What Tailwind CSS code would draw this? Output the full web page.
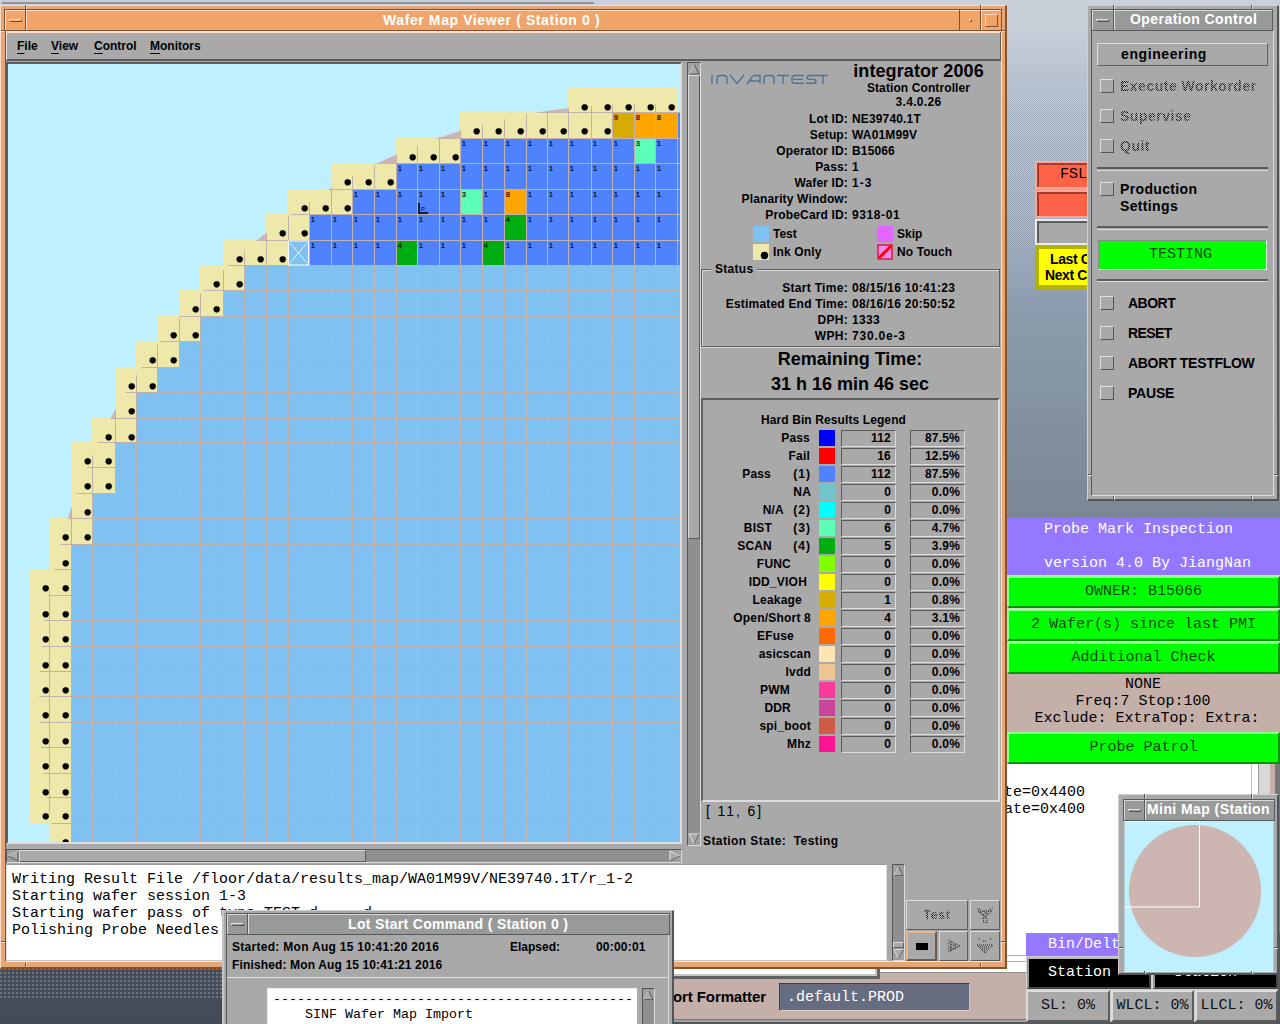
<!DOCTYPE html>
<html lang="en">
<head>
<meta charset="utf-8">
<title>Wafer Map Viewer</title>
<script src="https://cdn.jsdelivr.net/npm/@tailwindcss/browser@4"></script>
</head>
<body class="w-[1280px] h-[1024px] overflow-hidden font-['Liberation_Sans',sans-serif] text-black">
<div class="relative w-[1280px] h-[1024px] overflow-hidden bg-[linear-gradient(#c9d0da_0px,#c9d0da_25px,#8c9bad_300px,#8897a8_370px,#7b8794_515px,#474d59_968px,#444b57_1024px)]">

  <!-- desktop dither -->
  <div class="absolute left-[1007px] top-[26px] w-[273px] h-[294px] bg-[repeating-conic-gradient(#8393a7_0_25%,#d3dae3_0_50%)] bg-[length:2px_2px] opacity-50 [mask-image:linear-gradient(transparent,black_40%,black_60%,transparent)]"></div>
  <div class="absolute left-[1007px] top-[380px] w-[273px] h-[138px] bg-[repeating-conic-gradient(#66727f_0_25%,#93a2b1_0_50%)] bg-[length:2px_2px] opacity-40 [mask-image:linear-gradient(transparent,black)]"></div>
  <div class="absolute left-0 top-[968px] w-[230px] h-[30px] bg-[radial-gradient(circle_at_1px_1px,#6c7783_0.8px,transparent_1px)] bg-[length:4px_4px]"></div>
  <div class="absolute left-[2px] top-[2px] w-[592px] h-[2px] bg-[#8f959a]"></div>

  <!-- probing status stack -->
  <div class="absolute left-[1035px] top-[161px] w-[60px] flex flex-col gap-[1px] font-['Liberation_Mono',monospace] text-[15px]">
    <div class="h-7 border-2 border-[#ffa797] bg-[#ff6347] shadow-[inset_2px_2px_#a43b2d] pl-[23px] leading-[23px]">FSL</div>
    <div class="h-7 border-2 border-[#ffa797] bg-[#ff6347] shadow-[inset_2px_2px_#a43b2d]"></div>
    <div class="h-[26px] border-2 border-[#ececec] bg-[#a9a9a9] shadow-[inset_2px_2px_#5c5c5c]"></div>
    <div class="h-[44px] -mt-[1px] border-4 border-[#b2b200] bg-[#ffff00] font-['Liberation_Sans',sans-serif] font-bold text-[14px] tracking-[-0.4px] leading-4 whitespace-nowrap pt-[2px]">
      <div class="pl-[11px]">Last C</div>
      <div class="pl-[6px]">Next C</div>
    </div>
  </div>

  <!-- Probe mark inspection -->
  <div class="absolute left-[1007px] top-[518px] w-[273px] h-[246px] bg-[#c4b0a8] font-['Liberation_Mono',monospace] text-[15px] whitespace-nowrap">
    <div class="h-[57px] bg-[#9478ff] pl-[37px] pt-[3px] text-white leading-[17px]">Probe Mark Inspection<br><br>version 4.0 By JiangNan</div>
    <div class="flex flex-col gap-[1px] bg-[#c8e8c0] pt-[1px]">
      <div class="h-8 border-2 border-t-[#90ff90] border-l-[#90ff90] border-b-[#009400] border-r-[#009400] bg-[#00ff00] text-center leading-7 text-[#0c470c]">OWNER: B15066</div>
      <div class="h-8 border-2 border-t-[#90ff90] border-l-[#90ff90] border-b-[#009400] border-r-[#009400] bg-[#00ff00] text-center leading-7 text-[#0c470c]">2 Wafer(s) since last PMI</div>
      <div class="h-8 border-2 border-t-[#90ff90] border-l-[#90ff90] border-b-[#009400] border-r-[#009400] bg-[#00ff00] text-center leading-7 text-[#0c470c]">Additional Check</div>
    </div>
    <div class="h-[57px] pt-[2px] pl-[7px] text-center leading-[17px] text-black"><div class="-ml-2">NONE</div><div class="-ml-2">Freq:7 Stop:100</div><div>Exclude: ExtraTop: Extra:</div></div>
    <div class="h-8 mt-[1px] border-2 border-t-[#90ff90] border-l-[#90ff90] border-b-[#009400] border-r-[#009400] bg-[#00ff00] text-center leading-7 text-[#0c470c]">Probe Patrol</div>
  </div>

  <!-- log terminal behind -->
  <div class="absolute left-[880px] top-[764px] w-[400px] h-[208px] bg-white flex">
    <div class="w-[372px] pt-5 pl-[115px] font-['Liberation_Mono',monospace] text-[15px] leading-[17px] border-r border-[#c0c0c0] h-[191px]">ate=0x4400<br>&nbsp;ate=0x400</div>
    <div class="w-[6px]"></div>
    <div class="w-3 bg-[#d9d9d9] border-l border-[#999]"></div>
    <div class="w-[5px] bg-[#c4b0a8]"></div>
    <div class="grow bg-[#777]"></div>
  </div>
  <div class="absolute left-[1007px] top-[955px] w-[20px] h-[7px] border-y border-[#b0b0b0]"></div>

  <!-- report formatter window -->
  <div class="absolute left-[660px] top-[972px] w-[620px] h-[52px] border-t border-[#8e8e8e] bg-[#c4b0a8] flex flex-col">
    <div class="h-[46px] flex items-start">
      <div class="ml-[13px] mt-[14px] w-[106px] text-[15px] leading-5 font-bold tracking-[-0.1px]">ort Formatter</div>
      <div class="mt-[10px] w-[191px] h-[28px] bg-[#666d80] border border-t-[#3c414c] border-l-[#3c414c] border-b-[#dccfc8] border-r-[#d0c4c0] pl-[7px] leading-[27px] font-['Liberation_Mono',monospace] text-[15px] text-white">.default.PROD</div>
    </div>
    <div class="h-[3px] bg-[#a0a0a0] border-t border-[#777]"></div>
    <div class="grow bg-[#55585a]"></div>
  </div>
  <div class="absolute left-[600px] top-[960px] w-[280px] h-[19px] bg-white border-b-[3px] border-r-[3px] border-[#5f6464] shadow-[inset_-2px_-2px_#c8c8c8]"></div>

  <!-- bin / delta panel -->
  <div class="absolute left-[1026px] top-[933px] w-[254px] h-[91px] bg-[#d0d0d0] border-b-2 border-r-2 border-[#55585a] font-['Liberation_Mono',monospace] text-[15px] flex flex-col gap-[1px]">
    <div class="h-[23px] bg-[#9478ff] text-white leading-[23px] pl-[22px]">Bin/Delta</div>
    <div class="flex gap-[2px] h-[32px] pl-[1px] text-white leading-[27px]">
      <div class="w-[124px] bg-black border-2 border-t-[#bbb] border-l-[#999] border-b-[#444] border-r-[#444] pl-[19px]">Station +</div>
      <div class="w-[125px] bg-black border-2 border-t-[#bbb] border-l-[#999] border-b-[#444] border-r-[#444] pl-[19px]">Station +</div>
    </div>
    <div class="flex gap-[1px] h-[32px] leading-7 text-center text-[#111]">
      <div class="w-[84px] bg-[#a9a9a9] border-2 border-t-[#ddd] border-l-[#ddd] border-b-[#5c5c5c] border-r-[#5c5c5c]">SL: 0%</div>
      <div class="w-[83px] bg-[#a9a9a9] border-2 border-t-[#ddd] border-l-[#ddd] border-b-[#5c5c5c] border-r-[#5c5c5c]">WLCL: 0%</div>
      <div class="w-[83px] bg-[#a9a9a9] border-2 border-t-[#ddd] border-l-[#ddd] border-b-[#5c5c5c] border-r-[#5c5c5c]">LLCL: 0%</div>
    </div>
  </div>

  <!-- operation control window -->
  <div class="absolute left-[1087px] top-[5px] w-[192px] h-[496px] bg-[#a9a9a9] border border-t-[#d0d0d0] border-l-[#d0d0d0] border-b-[#50555a] border-r-[#50555a] shadow-[inset_-1px_-1px_#50555a]">
    <div class="m-[3px] mr-[5px] h-[22px] border border-[#555a5a] flex bg-[#979a99] shadow-[inset_1px_1px_#d8d8d8]">
      <div class="w-[22px] border-r border-[#555a5a] flex items-center justify-center"><div class="w-[13px] h-[3px] border border-t-[#e0e0e0] border-l-[#e0e0e0] border-b-[#555] border-r-[#555]"></div></div>
      <div class="grow border-l border-[#e0e0e0] pl-[15px] text-white font-bold text-[14px] leading-[19px] tracking-[0.45px] whitespace-nowrap">Operation Control</div>
    </div>
    <div class="ml-[3px] mr-[4px] -mt-[3px] h-[465px] border border-t-0 border-l-[#555a5a] border-r-[#dcdcdc] border-b-[#dcdcdc] px-[5px] flex flex-col text-[14px] font-bold">
      <div class="mt-[12px] h-[23px] border border-t-[#dcdcdc] border-l-[#dcdcdc] border-b-[#5f5f5f] border-r-[#5f5f5f] pl-[23px] leading-[20px] tracking-[0.6px]">engineering</div>
      <div class="flex flex-col mt-[5px] pl-[3px] tracking-[0.5px]">
        <div class="h-[30px] flex items-center gap-[6px]"><div class="w-[14px] h-[14px] border border-t-[#e0e0e0] border-l-[#e0e0e0] border-b-[#555] border-r-[#555]"></div><div class="whitespace-nowrap bg-[repeating-conic-gradient(#111_0_25%,#a9a9a9_0_50%)] bg-[length:2px_2px] bg-clip-text text-transparent">Execute Workorder</div></div>
        <div class="h-[30px] flex items-center gap-[6px]"><div class="w-[14px] h-[14px] border border-t-[#e0e0e0] border-l-[#e0e0e0] border-b-[#555] border-r-[#555]"></div><div class="bg-[repeating-conic-gradient(#111_0_25%,#a9a9a9_0_50%)] bg-[length:2px_2px] bg-clip-text text-transparent">Supervise</div></div>
        <div class="h-[30px] flex items-center gap-[6px]"><div class="w-[14px] h-[14px] border border-t-[#e0e0e0] border-l-[#e0e0e0] border-b-[#555] border-r-[#555]"></div><div class="bg-[repeating-conic-gradient(#111_0_25%,#a9a9a9_0_50%)] bg-[length:2px_2px] bg-clip-text text-transparent">Quit</div></div>
      </div>
      <div class="mt-[6px] h-[4px] border-t-2 border-b border-t-[#5c5c5c] border-b-[#dcdcdc]"></div>
      <div class="h-[55px] pl-[3px] pt-[10px] flex gap-[6px]"><div class="w-[14px] h-[14px] mt-[1px] border border-t-[#e0e0e0] border-l-[#e0e0e0] border-b-[#555] border-r-[#555]"></div><div class="leading-[17px] tracking-[0.35px]">Production<br>Settings</div></div>
      <div class="h-[4px] border-t-2 border-b border-t-[#5c5c5c] border-b-[#dcdcdc]"></div>
      <div class="mt-[10px] h-[30px] mx-[1px] border border-t-[#888] border-l-[#888] border-b-[#e0ffe0] border-r-[#e0ffe0] bg-[#00ff00] text-center font-normal font-['Liberation_Mono',monospace] text-[15px] leading-[28px] text-[#0c470c] pr-[4px]">TESTING</div>
      <div class="mt-[9px] h-[3px] border-t-2 border-b border-t-[#5c5c5c] border-b-[#dcdcdc]"></div>
      <div class="flex flex-col mt-[6px] pl-[3px] text-[14px]">
        <div class="h-[30px] flex items-center gap-[14px]"><div class="w-[14px] h-[14px] border border-t-[#e0e0e0] border-l-[#e0e0e0] border-b-[#555] border-r-[#555]"></div><div class="tracking-[-0.5px]">ABORT</div></div>
        <div class="h-[30px] flex items-center gap-[14px]"><div class="w-[14px] h-[14px] border border-t-[#e0e0e0] border-l-[#e0e0e0] border-b-[#555] border-r-[#555]"></div><div class="tracking-[-0.6px]">RESET</div></div>
        <div class="h-[30px] flex items-center gap-[14px]"><div class="w-[14px] h-[14px] border border-t-[#e0e0e0] border-l-[#e0e0e0] border-b-[#555] border-r-[#555]"></div><div class="whitespace-nowrap tracking-[-0.3px]">ABORT TESTFLOW</div></div>
        <div class="h-[30px] flex items-center gap-[14px]"><div class="w-[14px] h-[14px] border border-t-[#e0e0e0] border-l-[#e0e0e0] border-b-[#555] border-r-[#555]"></div><div class="tracking-[-0.2px]">PAUSE</div></div>
      </div>
    </div>
    <div class="absolute left-[25px] -top-[1px] w-[2px] h-[4px] border-l border-[#555] bg-[#e0e0e0]"></div>
    <div class="absolute left-[163px] -top-[1px] w-[2px] h-[4px] border-l border-[#555] bg-[#e0e0e0]"></div>
    <div class="absolute left-[25px] bottom-0 w-[2px] h-[4px] border-l border-[#555] bg-[#e0e0e0]"></div>
    <div class="absolute left-[163px] bottom-0 w-[2px] h-[4px] border-l border-[#555] bg-[#e0e0e0]"></div>
    <div class="absolute left-0 bottom-[24px] w-[4px] h-[2px] border-t border-[#555] bg-[#e0e0e0]"></div>
    <div class="absolute right-0 bottom-[24px] w-[4px] h-[2px] border-t border-[#555] bg-[#e0e0e0]"></div>
  </div>

  <!-- mini map window -->
  <div class="absolute left-[1118px] top-[794px] w-[161px] h-[181px] bg-[#a9a9a9] border border-t-[#d0d0d0] border-l-[#d0d0d0] border-b-[#50555a] border-r-[#50555a] shadow-[inset_-1px_-1px_#50555a]">
    <div class="mt-[4px] ml-[4px] mr-[3px] h-[22px] border border-[#555a5a] flex bg-[#979a99] shadow-[inset_1px_1px_#d8d8d8]">
      <div class="w-[21px] border-r border-[#555a5a] flex items-center justify-center"><div class="w-[13px] h-[3px] border border-t-[#e0e0e0] border-l-[#e0e0e0] border-b-[#555] border-r-[#555]"></div></div>
      <div class="grow border-l border-[#e0e0e0] pl-[1px] text-white font-bold text-[14px] leading-[19px] whitespace-nowrap tracking-[0.42px]">Mini Map (Station</div>
    </div>
    <svg class="block ml-[5px] border-b border-[#e8e8e8]" width="150" height="151" viewBox="0 0 150 151"><rect width="150" height="151" fill="#bff0ff"/><circle cx="71" cy="70.500" r="66.500" fill="#cdb5b2"/><path d="M0 .5H75.500V86.500H0" fill="none" stroke="#fff"/></svg>
    <div class="absolute left-[25px] -top-[1px] w-[2px] h-[5px] border-l border-[#555] bg-[#e0e0e0]"></div>
    <div class="absolute left-[132px] -top-[1px] w-[2px] h-[5px] border-l border-[#555] bg-[#e0e0e0]"></div>
    <div class="absolute left-[25px] bottom-0 w-[2px] h-[3px] border-l border-[#555] bg-[#e0e0e0]"></div>
    <div class="absolute left-[132px] bottom-0 w-[2px] h-[3px] border-l border-[#555] bg-[#e0e0e0]"></div>
    <div class="absolute left-0 bottom-[25px] w-[4px] h-[2px] border-t border-[#555] bg-[#e0e0e0]"></div>
    <div class="absolute right-0 bottom-[25px] w-[4px] h-[2px] border-t border-[#555] bg-[#e0e0e0]"></div>
  </div>

  <!-- wafer map viewer window -->
  <div class="absolute left-0 top-[5px] w-[1007px] h-[964px] bg-[#e6a675] border-t border-t-[#fbdfca] border-l border-l-[#fbdfca] border-r-2 border-r-[#87532f] border-b-2 border-b-[#87532f]">
    <div class="ml-[3px] mr-[3px] mt-[3px] h-[22px] bg-[#f0a469] border border-[#7c5030] shadow-[inset_1px_1px_#fbdfca] flex">
      <div class="w-[21px] border-r border-[#7c5030] flex items-center justify-center"><div class="w-[13px] h-[3px] border border-t-[#fbdfca] border-l-[#fbdfca] border-b-[#7c5030] border-r-[#7c5030]"></div></div>
      <div class="grow border-l border-[#fbdfca] pl-[356px] text-white font-bold text-[14px] leading-[20px] tracking-[0.6px] whitespace-nowrap">Wafer Map Viewer ( Station 0 )</div>
      <div class="w-[22px] border-l border-r border-[#7c5030] flex items-center justify-center"><div class="w-[3px] h-[3px] border border-t-[#fbdfca] border-l-[#fbdfca] border-b-[#7c5030] border-r-[#7c5030]"></div></div>
      <div class="w-[20px] border-l border-[#fbdfca] flex items-center justify-center"><div class="w-[13px] h-[13px] border border-t-[#fbdfca] border-l-[#fbdfca] border-b-[#7c5030] border-r-[#7c5030]"></div></div>
    </div>
    <div class="ml-[4px] mr-[3px] h-[931px] bg-[#a9a9a9] border-l border-[#7c5030] border-r border-r-[#fbdfca] border-b border-b-[#fbdfca] flex flex-col">
      <div class="h-[30px] border-t-2 border-t-[#fbdfca] border-l border-l-[#e0e0e0] border-b-2 border-b-[#5b5b5b] border-r border-r-[#5b5b5b] flex font-bold text-[12px] leading-[26px] pl-[10px]">
        <div class="w-[34px]"><span class="underline underline-offset-[3px]">F</span>ile</div>
        <div class="w-[43px]"><span class="underline underline-offset-[3px]">V</span>iew</div>
        <div class="w-[56px]"><span class="underline underline-offset-[3px]">C</span>ontrol</div>
        <div><span class="underline underline-offset-[3px]">M</span>onitors</div>
      </div>
      <div class="flex h-[803px]">
        <div class="w-[676px] flex flex-col">
          <div class="mt-[1px] h-[782px] border-2 border-t-[#5b5b5b] border-l-[#5b5b5b] border-r-[#dcdcdc] border-b-[#dcdcdc] overflow-hidden">
            <svg id="map" class="block" width="672" height="778" viewBox="8 64 672 778"></svg>
          </div>
          <div class="mt-[5px] h-[14px] border border-t-[#555] border-l-[#555] border-b-[#dcdcdc] border-r-[#dcdcdc] bg-[#8f8f8f] flex">
            <svg class="w-[12px] h-[12px]" viewBox="0 0 12 12"><rect width="12" height="12" fill="#a0a0a0"/><path d="M11 1V11L1 6Z" fill="#a9a9a9" stroke="#555"/><path d="M11 1L1 6" stroke="#e0e0e0"/></svg>
            <div class="w-[347px] h-3 bg-[#a9a9a9] border border-t-[#dcdcdc] border-l-[#dcdcdc] border-b-[#5b5b5b] border-r-[#5b5b5b]"></div>
            <div class="grow"></div>
            <svg class="w-[12px] h-[12px]" viewBox="0 0 12 12"><rect width="12" height="12" fill="#a0a0a0"/><path d="M1 1V11L11 6Z" fill="#a9a9a9" stroke="#e0e0e0"/><path d="M11 6L1 11" stroke="#555"/></svg>
          </div>
        </div>
        <div class="w-[14px] shrink-0 ml-[5px] mt-[1px] h-[784px] border border-t-[#555] border-l-[#555] border-b-[#dcdcdc] border-r-[#dcdcdc] bg-[#8f8f8f] flex flex-col">
          <svg class="w-3 h-3" viewBox="0 0 12 12"><rect width="12" height="12" fill="#a0a0a0"/><path d="M1 11H11L6 1Z" fill="#a9a9a9" stroke="#555"/><path d="M1 11L6 1" stroke="#e0e0e0"/></svg>
          <div class="h-[464px] bg-[#a9a9a9] border border-t-[#dcdcdc] border-l-[#dcdcdc] border-b-[#5b5b5b] border-r-[#5b5b5b]"></div>
          <div class="grow"></div>
          <svg class="w-3 h-3" viewBox="0 0 12 12"><rect width="12" height="12" fill="#a0a0a0"/><path d="M1 1H11L6 11Z" fill="#a9a9a9" stroke="#e0e0e0"/><path d="M11 1L6 11" stroke="#555"/></svg>
        </div>
        <!-- information column -->
        <div class="-ml-[1px] mt-[1px] w-[300px] shrink-0 flex flex-col text-[12px] font-bold leading-4 whitespace-nowrap">
          <div class="flex h-[49px]">
            <div class="w-[152px] pt-[11px] pl-[11px]"><svg width="118" height="12" viewBox="0 0 118 12" fill="none" stroke="#4d7396" stroke-width="1.400"><path d="M1 2V11M6 11V5Q6 2.500 9 2.500H13Q16 2.500 16 5V11M19 2L26 10.500L33 2M36 11L41 4Q42 2.500 44 2.500H49V11M38 8H49M53 11V5Q53 2.500 56 2.500H60Q63 2.500 63 5V11M66 2.500H78M72 2.500V11M93 2.500H84Q81 2.500 81 5V8Q81 10.300 84 10.300H93M82 6.400H92M107 2.500H99Q96 2.500 96 4.500Q96 6.400 99 6.400H102Q105 6.400 105 8.500Q105 10.300 102 10.300H95M105 2.500H117M112 2.500V11"/></svg></div>
            <div class="w-[133px] text-center"><div class="text-[18px] leading-[18px] tracking-[0.1px]">integrator 2006</div><div class="leading-[14px] mt-[1px] tracking-[0.1px]">Station Controller</div><div class="leading-[14px] tracking-[0.3px]">3.4.0.26</div></div>
          </div>
          <div class="grid grid-cols-[148px_auto] gap-x-[4px] text-left tracking-[0.15px]">
            <div class="text-right">Lot ID:</div><div>NE39740.1T</div>
            <div class="text-right">Setup:</div><div>WA01M99V</div>
            <div class="text-right">Operator ID:</div><div>B15066</div>
            <div class="text-right">Pass:</div><div>1</div>
            <div class="text-right">Wafer ID:</div><div class="tracking-[1px]">1-3</div>
            <div class="text-right">Planarity Window:</div><div></div>
            <div class="text-right">ProbeCard ID:</div><div class="tracking-[0.6px]">9318-01</div>
          </div>
          <div class="grid grid-cols-[124px_auto] pl-[53px] mt-[3px] gap-y-[2px]">
            <div class="flex gap-1"><div class="w-4 h-4 bg-[#7fc1f0]"></div>Test</div>
            <div class="flex gap-1"><div class="w-4 h-4 bg-[#e066ff]"></div>Skip</div>
            <div class="flex gap-1 tracking-[0.15px]"><svg width="16" height="16"><rect width="16" height="16" fill="#eee8aa"/><circle cx="11.500" cy="11.500" r="3.700"/></svg>Ink Only</div>
            <div class="flex gap-1 tracking-[0.1px]"><svg width="16" height="16"><rect x="1" y="1" width="14" height="14" fill="#e78cf5" stroke="#e81440" stroke-width="1.500"/><path d="M2 14L14 2" stroke="#ff0000" stroke-width="3"/></svg>No Touch</div>
          </div>
          <div class="relative mt-[9px] ml-[1px] h-[78px] border border-[#5f5f5f] shadow-[inset_1px_1px_#d8d8d8,0_1px_#d8d8d8] pt-[10px]">
            <div class="absolute left-[9px] -top-[9px] px-[4px] bg-[#a9a9a9] tracking-[0.3px]">Status</div>
            <div class="grid grid-cols-[146px_auto] gap-x-[4px] tracking-[0.3px]">
              <div class="text-right">Start Time:</div><div>08/15/16 10:41:23</div>
              <div class="text-right tracking-[0.2px]">Estimated End Time:</div><div>08/16/16 20:50:52</div>
              <div class="text-right">DPH:</div><div>1333</div>
              <div class="text-right">WPH:</div><div class="tracking-[0.8px]">730.0e-3</div>
            </div>
          </div>
          <div class="text-center text-[18px] leading-[25px] h-[51px]">Remaining Time:<br>31 h 16 min 46 sec</div>
          <div class="ml-[1px] h-[404px] border-2 border-t-[#5f5f5f] border-l-[#5f5f5f] border-b-[#dcdcdc] border-r-[#dcdcdc] pt-[12px] tracking-[0.1px]">
            <div class="pl-[58px] h-[18px]">Hard Bin Results Legend</div>
            <div id="bins" class="flex flex-col"></div>
          </div>
          <div class="pl-[6px] h-[18px] leading-[18px] text-[14px] font-normal tracking-[1.9px]">[ 11, 6]</div>
          <div class="pl-[3px] mt-[13px] whitespace-pre tracking-[0.42px]">Station State:  Testing</div>
        </div>
      </div>
      <div class="flex h-[97px]">
        <div class="w-[881px] h-[97px] bg-white border border-t-[#999] border-l-[#e0e0e0] border-b-[#c8c8c8] border-r-[#e0e0e0] pt-[6px] pl-[5px] font-['Liberation_Mono',monospace] text-[15px] leading-[17px] whitespace-pre">Writing Result File /floor/data/results_map/WA01M99V/NE39740.1T/r_1-2
Starting wafer session 1-3
Starting wafer pass of type TEST d     d
Polishing Probe Needles</div>
        <div class="w-[13px] ml-[5px] h-[97px] border border-t-[#555] border-l-[#555] border-b-[#dcdcdc] border-r-[#dcdcdc] bg-[#8f8f8f] flex flex-col">
          <svg class="w-[11px] h-[12px]" viewBox="0 0 12 12"><rect width="12" height="12" fill="#a0a0a0"/><path d="M1 11H11L6 1Z" fill="#a9a9a9" stroke="#555"/><path d="M1 11L6 1" stroke="#e0e0e0"/></svg>
          <div class="grow"></div>
          <div class="h-[6px] bg-[#a9a9a9] border border-t-[#dcdcdc] border-l-[#dcdcdc] border-b-[#5b5b5b] border-r-[#5b5b5b]"></div>
          <svg class="w-[11px] h-[12px]" viewBox="0 0 12 12"><rect width="12" height="12" fill="#a0a0a0"/><path d="M1 1H11L6 11Z" fill="#a9a9a9" stroke="#e0e0e0"/><path d="M11 1L6 11" stroke="#555"/></svg>
        </div>
        <div class="ml-[1px] pt-[36px] flex flex-col gap-[1px]">
          <div class="flex gap-[2px] h-[30px]">
            <div class="w-[62px] border border-t-[#dcdcdc] border-l-[#dcdcdc] border-b-[#5b5b5b] border-r-[#5b5b5b] text-center text-[12px] leading-[28px] font-bold"><span class="tracking-[0.8px] bg-[repeating-conic-gradient(#111_0_25%,#a9a9a9_0_50%)] bg-[length:2px_2px] bg-clip-text text-transparent">Test</span></div>
            <div class="w-[30px] border border-t-[#dcdcdc] border-l-[#dcdcdc] border-b-[#5b5b5b] border-r-[#5b5b5b] flex items-center justify-center"><svg width="16" height="15"><path d="M0 0L4 2M16 0L12 2M1 3H15L8 9ZM6 10H10V15H7Z" fill="none" stroke="#222" stroke-dasharray="1 1"/><path d="M3 4L9 9M6 3L11 7M12 3L6 7" stroke="#222" stroke-dasharray="1 1"/></svg></div>
          </div>
          <div class="flex gap-[2px] h-[30px]">
            <div class="w-[31px] border-2 border-t-[#e8b48c] border-l-[#e8b48c] border-b-[#6b5b4c] border-r-[#6b5b4c] flex items-center justify-center"><div class="w-3 h-[7px] bg-black"></div></div>
            <div class="w-[29px] border border-t-[#dcdcdc] border-l-[#dcdcdc] border-b-[#5b5b5b] border-r-[#5b5b5b] flex items-center justify-center"><svg width="14" height="13"><path d="M1 0L13 6L1 12M1 3L10 7M1 6L7 9M1 9L4 10M4 2V11M8 4V9" fill="none" stroke="#222" stroke-dasharray="1 1"/></svg></div>
            <div class="w-[30px] border border-t-[#dcdcdc] border-l-[#dcdcdc] border-b-[#5b5b5b] border-r-[#5b5b5b] flex items-center justify-center"><svg width="16" height="16"><path d="M1 0L4 2M15 0L12 2M6 3H10M0 7H16L8 15ZM3 9H13M5 11H11M7 13H9" fill="none" stroke="#222" stroke-dasharray="1 1"/></svg></div>
          </div>
        </div>
      </div>
    </div>
    <div class="absolute left-[24px] -top-[1px] w-[2px] h-[4px] bg-[#fbdfca] border-l border-[#7c5030]"></div>
    <div class="absolute left-[979px] -top-[1px] w-[2px] h-[4px] bg-[#fbdfca] border-l border-[#7c5030]"></div>
    <div class="absolute left-0 top-[24px] w-[4px] h-[2px] bg-[#fbdfca] border-t border-[#7c5030]"></div>
    <div class="absolute right-0 top-[24px] w-[4px] h-[2px] bg-[#fbdfca] border-t border-[#7c5030]"></div>
    <div class="absolute left-[24px] bottom-0 w-[2px] h-[4px] bg-[#fbdfca] border-l border-[#7c5030]"></div>
    <div class="absolute left-[979px] bottom-0 w-[2px] h-[4px] bg-[#fbdfca] border-l border-[#7c5030]"></div>
    <div class="absolute left-0 bottom-[24px] w-[4px] h-[2px] bg-[#fbdfca] border-t border-[#7c5030]"></div>
    <div class="absolute right-0 bottom-[24px] w-[4px] h-[2px] bg-[#fbdfca] border-t border-[#7c5030]"></div>
  </div>

  <!-- lot start command window -->
  <div class="absolute left-[222px] top-[910px] w-[452px] h-[130px] bg-[#a9a9a9] border border-t-[#d0d0d0] border-l-2 border-l-[#c4c4c4] border-r-2 border-r-[#50555a]">
    <div class="mt-[2px] ml-[2px] mr-[2px] h-[22px] border border-[#555a5a] flex bg-[#979a99] shadow-[inset_1px_1px_#d8d8d8]">
      <div class="w-[21px] border-r border-[#555a5a] flex items-center justify-center"><div class="w-[13px] h-[3px] border border-t-[#e0e0e0] border-l-[#e0e0e0] border-b-[#555] border-r-[#555]"></div></div>
      <div class="grow border-l border-[#e0e0e0] pl-[99px] text-white font-bold text-[14px] leading-[21px] tracking-[0.33px]">Lot Start Command ( Station 0 )</div>
    </div>
    <div class="ml-[2px] mr-[3px] border-l border-[#555a5a] border-r border-r-[#d8d8d8] h-[100px] text-[12px] font-bold leading-[18px]">
      <div class="h-[43px] pt-[3px] pl-[5px] border-b border-[#e0e0e0] flex whitespace-pre">
        <div class="w-[278px] tracking-[0.29px]"><div>Started: Mon Aug 15 10:41:20 2016</div><div class="tracking-[0.14px]">Finished: Mon Aug 15 10:41:21 2016</div></div>
        <div class="w-[86px]">Elapsed:</div>
        <div class="tracking-[0.2px]">00:00:01</div>
      </div>
      <div class="flex mt-[10px] pl-[40px]">
        <div class="w-[370px] h-[60px] bg-white border-t border-l border-[#eee] font-normal font-['Liberation_Mono',monospace] text-[13.33px] leading-[15px] whitespace-pre pt-[3px] pl-[5px]">---------------------------------------------
    SINF Wafer Map Import</div>
        <div class="w-[13px] ml-[5px] h-[60px] border border-t-[#555] border-l-[#555] border-r-[#dcdcdc] bg-[#8f8f8f]">
          <svg class="w-[11px] h-[12px]" viewBox="0 0 12 12"><rect width="12" height="12" fill="#a0a0a0"/><path d="M1 11H11L6 1Z" fill="#a9a9a9" stroke="#555"/><path d="M1 11L6 1" stroke="#e0e0e0"/></svg>
        </div>
      </div>
    </div>
  </div>
</div>

<script>
// Column and row boundaries of the die grid.
const X = [29,49,71,92,115,136,157,179,200,223,244,266,288,309,331,352,374,396,417,439,460,482,504,526,547,568,591,612,634,655,677,699];
const Y = [88,112,138,163,189,214,240,265,290,316,341,367,392,418,442,467,493,518,544,569,595,620,646,671,696,722,747,773,797,823,849];
// First column and number of ink-only dies of each row.
const ink = [[25,5],[20,7],[17,3],[14,3],[12,3],[11,2],[9,3],[8,2],[7,2],[6,2],[5,2],[4,2],[4,1],[3,2],[2,2],[2,2],[2,1],[1,2],[1,1]];
for (let r = 19; r < 29; r++) ink.push([0,2]);
ink.push([1,1]);
const special = {'1,27':9,'1,28':8,'1,29':8,'2,28':3,'4,20':3,'4,22':8,'5,22':4,'6,17':4,'6,21':4};
const binFill = {1:'#4f82ff',3:'#5cffb8',4:'#00ae14',8:'#ffa500',9:'#d6ac00'};
let cells = '', lines = '', marks = '';
ink.forEach(([start, n], r) => {
  const y = Y[r], h = Y[r + 1] - y;
  for (let c = start; c < 31; c++) {
    if (r === 0 && c === 30) continue;
    const x = X[c], w = X[c + 1] - x;
    let fill = '#7fc1f0';
    if (c < start + n) {
      fill = '#eee8aa';
      marks += `<circle cx="${x + 16.7}" cy="${y + 19.3}" r="3.1"/>`;
    } else if (r < 7 && !(r === 6 && c === 12)) {
      const bin = special[r + ',' + c] || 1;
      fill = binFill[bin];
      if (c < 30) marks += `<text x="${x + 2}" y="${y + 8}">${bin}</text>`;
    }
    cells += `<rect x="${x}" y="${y}" width="${w}" height="${h}" fill="${fill}"/>`;
    lines += `<path d="M${x + .5} ${y}v${h}M${x} ${y + .5}h${w}"/>`;
  }
});
document.getElementById('map').innerHTML =
  `<defs><clipPath id="disc"><circle cx="637" cy="702" r="598"/></clipPath></defs>
   <rect x="8" y="64" width="672" height="778" fill="#bff0ff"/>
   <circle cx="637" cy="702" r="598" fill="#cdb5b2"/>` + '<rect x="569" y="64" width="111" height="48" fill="#bff0ff"/>' + cells +
  `<g clip-path="url(#disc)" fill="none" stroke="#c3b2ac">${lines}</g>
   <g font-family="Liberation Sans" font-size="7" stroke="#000" stroke-width=".2">${marks}</g>
   <g fill="none" stroke="#fff"><rect x="288.500" y="241" width="20" height="24"/><path d="M290 243L307 263M307 243L290 263" stroke-width=".8"/></g>
   <path d="M419 203V213H428" fill="none" stroke="#000" stroke-width="1.6"/><text x="421" y="211" font-family="Liberation Sans" font-size="6">P</text>`;

// Hard bin rows: left label, its right inset, bin number, colour, count, share.
const bins = [
  ['Pass',1,'','#0000ff',112,'87.5%'],['Fail',1,'','#ff0000',16,'12.5%'],['Pass',40,'(1)','#4f82ff',112,'87.5%'],
  ['NA',0,'','#70c4cc',0,'0.0%'],['N/A',27,'(2)','#00ffff',0,'0.0%'],['BIST',39,'(3)','#5cffb8',6,'4.7%'],
  ['SCAN',39,'(4)','#00ae14',5,'3.9%'],['FUNC',20,'','#80ff00',0,'0.0%'],['IDD_VIOH',4,'','#ffff00',0,'0.0%'],
  ['Leakage',9,'','#d6ac00',1,'0.8%'],['Open/Short 8',0,'','#ffa500',4,'3.1%'],['EFuse',17,'','#ff6a00',0,'0.0%'],
  ['asicscan',0,'','#ffe4b5',0,'0.0%'],['lvdd',0,'','#eec591',0,'0.0%'],['PWM',21,'','#f93a98',0,'0.0%'],
  ['DDR',20,'','#c8459c',0,'0.0%'],['spi_boot',0,'','#cd5b45',0,'0.0%'],['Mhz',0,'','#ff1493',0,'0.0%']];
document.getElementById('bins').innerHTML = bins.map(([name, inset, num, color, count, share]) =>
  `<div class="flex h-[18px]">
     <div class="relative w-[108px] text-right tracking-[0.2px]"><span style="padding-right:${inset}px">${name}</span><span class="absolute right-0 top-0 tracking-[1px]">${num}</span></div>
     <div class="w-4 h-4 ml-[8px]" style="background:${color}"></div>
     <div class="w-[55px] h-[17px] ml-[6px] border border-t-[#5b5b5b] border-l-[#5b5b5b] border-b-[#dcdcdc] border-r-[#dcdcdc] pr-[4px] leading-[15px] text-right tracking-[0.2px]">${count}</div>
     <div class="w-[55px] h-[17px] ml-[14px] border border-t-[#5b5b5b] border-l-[#5b5b5b] border-b-[#dcdcdc] border-r-[#dcdcdc] pr-[4px] leading-[15px] text-right tracking-[0.2px]">${share}</div>
   </div>`).join('');
</script>
</body>
</html>
